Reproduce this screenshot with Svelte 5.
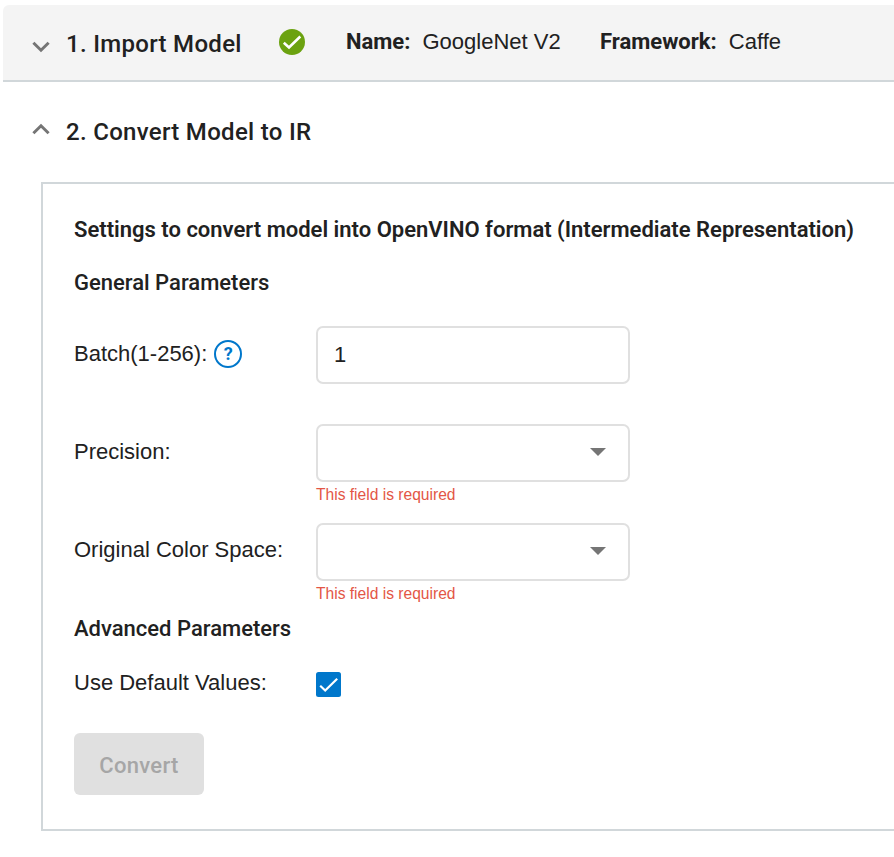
<script>
  const selects = ['Precision:', 'Original Color Space:'];
</script>

<div class="page">
  <header class="stage done">
    <svg class="chevron" width="18" height="12" viewBox="0 0 18 12"><path d="M1.4 1.8 9 9.2l7.600-7.400" /></svg>
    <h2>1. Import Model</h2>
    <svg class="status" width="26" height="26" viewBox="0 0 26 26">
      <circle cx="13" cy="13" r="13" fill="#6ba210" />
      <path d="m4.800 13.800 5.200 4.700L21.300 7.500" fill="none" stroke="#fff" stroke-width="2.600" />
    </svg>
    <div class="info name"><b>Name:</b><span>GoogleNet V2</span></div>
    <div class="info framework"><b>Framework:</b><span>Caffe</span></div>
  </header>

  <header class="stage open">
    <svg class="chevron" width="18" height="12" viewBox="0 0 18 12"><path d="M1.400 10.200 9 2.800l7.600 7.400" /></svg>
    <h2>2. Convert Model to IR</h2>
  </header>

  <section class="panel">
    <h3 class="title">Settings to convert model into OpenVINO format (Intermediate Representation)</h3>
    <h4 class="general">General Parameters</h4>

    <div class="row batch">
      <span class="label">Batch(1-256):
        <span class="help">?</span>
      </span>
      <div class="control"><span>1</span></div>
    </div>

    {#each selects as label}
      <div class="row">
        <span class="label">{label}</span>
        <div class="field">
          <div class="control select">
            <svg width="16" height="8" viewBox="0 0 16 8"><path d="M0 0h16L8 8z" fill="#757575" /></svg>
          </div>
          <span class="error">This field is required</span>
        </div>
      </div>
    {/each}

    <h4 class="advanced">Advanced Parameters</h4>
    <div class="defaults">
      <span class="label">Use Default Values:</span>
      <svg class="check" width="25" height="25" viewBox="0 0 25 25">
        <rect width="25" height="25" rx="2.500" fill="#0077cb" />
        <path d="m4.200 13.800 5 4.700L21.200 6.700" fill="none" stroke="#fff" stroke-width="2.200" />
      </svg>
    </div>
    <button disabled>Convert</button>
  </section>
</div>

<style>
  :global(body) {
    margin: 0;
    background: #fff;
    overflow: hidden;
  }
  .page {
    height: 857px;
    box-sizing: border-box;
    padding: 5px 0 0 3px;
    color: #212121;
    font-family: "Liberation Sans", Arial, sans-serif;
    font-size: 22px;
    overflow: hidden;
  }
  h2, h3, h4, b {
    margin: 0;
    font-family: Roboto, sans-serif;
    font-weight: 500;
    white-space: nowrap;
  }
  h2 {
    font-size: 24px;
    line-height: 30px;
    letter-spacing: 0.3px;
  }
  h3, h4 {
    font-size: 22px;
    line-height: 26px;
  }
  .stage {
    display: flex;
    box-sizing: border-box;
    padding-left: 29px;
  }
  .done {
    height: 77px;
    padding-top: 24px;
    background: #f4f4f4;
    border-bottom: 2px solid #d1d7da;
    border-top-left-radius: 6px;
  }
  .open {
    height: 100px;
    padding-top: 35px;
  }
  .chevron {
    flex: none;
    margin: 12px 16px 0 0;
    fill: none;
    stroke: #757575;
    stroke-width: 3;
  }
  .open .chevron {
    margin-top: 6px;
  }
  .done h2 {
    width: 213px;
  }
  .status {
    flex: none;
  }
  .info {
    display: flex;
    gap: 12px;
    line-height: 26px;
    white-space: nowrap;
  }
  .info b {
    font-weight: 700;
  }
  .name {
    width: 254px;
    margin-left: 41px;
  }
  .panel {
    height: 649px;
    width: 900px;
    box-sizing: border-box;
    margin-left: 38px;
    padding: 33px 0 0 31px;
    border: 2px solid #d1d7da;
  }
  .title {
    font-weight: 600;
  }
  .general {
    margin: 27px 0 30px;
  }
  .row {
    display: flex;
    height: 98.500px;
  }
  .row.batch {
    height: 98px;
  }
  .label {
    display: flex;
    align-items: center;
    width: 242px;
    height: 55px;
    white-space: nowrap;
  }
  .help {
    display: flex;
    align-items: center;
    justify-content: center;
    box-sizing: border-box;
    width: 28px;
    height: 28px;
    margin-left: 7px;
    border: 2px solid #0077cb;
    border-radius: 50%;
    color: #0077cb;
    font: 700 18px/24px Roboto, sans-serif;
  }
  .control {
    display: flex;
    box-sizing: border-box;
    width: 314px;
    height: 58px;
    padding: 14px 16px;
    border: 2px solid #e0e0e0;
    border-radius: 7px;
    line-height: 26px;
  }
  .select {
    justify-content: flex-end;
    padding: 22px 22px 0 0;
  }
  .error {
    display: block;
    margin-top: 4px;
    color: #e35645;
    font-size: 15.600px;
    line-height: 18px;
  }
  .advanced {
    margin-top: -5px;
  }
  .defaults {
    display: flex;
    align-items: center;
    height: 55px;
    margin-top: 13px;
  }
  .check {
    margin-top: 3px;
  }
  button {
    display: block;
    width: 130px;
    height: 62px;
    margin-top: 23px;
    padding: 3px 0 0;
    border: 0;
    border-radius: 6px;
    background: #e0e0e0;
    color: #a6a6a6;
    font: 500 22px/26px Roboto, sans-serif;
    letter-spacing: 0.3px;
  }
</style>
